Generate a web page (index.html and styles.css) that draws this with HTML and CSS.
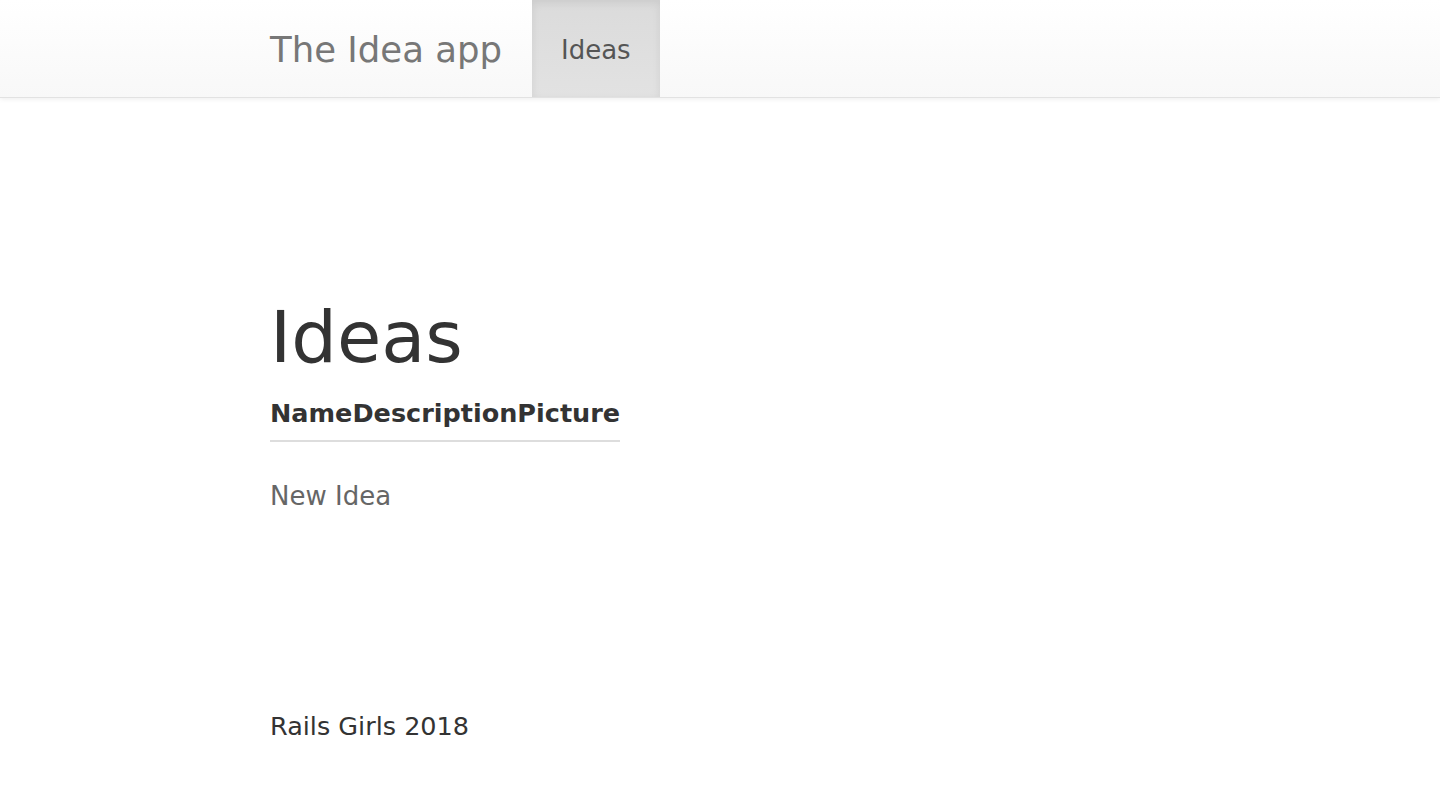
FILE: index.html
```html
<!DOCTYPE html>
<html lang="en">
<head>
<meta charset="utf-8">
<title>The Idea app</title>
<link rel="stylesheet" href="styles.css">
</head>
<body>
<nav class="navbar">
  <div class="container nav-inner">
    <a class="brand" href="#">The Idea app</a>
    <ul class="nav">
      <li class="active"><a href="#">Ideas</a></li>
    </ul>
  </div>
</nav>
<main class="container content">
  <h1 class="title">Ideas</h1>
  <table class="ideas">
    <thead>
      <tr><th>Name</th><th>Description</th><th>Picture</th></tr>
    </thead>
    <tbody></tbody>
  </table>
  <p class="new-link"><a href="#">New Idea</a></p>
</main>
<footer class="container footer">
  <p>Rails Girls 2018</p>
</footer>
</body>
</html>
```
FILE: styles.css
```css
* { box-sizing: border-box; }
html, body { margin: 0; padding: 0; }
body {
  font-family: "DejaVu Sans", Verdana, sans-serif;
  color: #333;
  background: #fff;
}
.container {
  width: 900px;
  margin: 0 0 0 270px;
}
.navbar {
  height: 98px;
  background: linear-gradient(to bottom, #fff 0, #f8f8f8 100%);
  border-bottom: 1px solid #e2e2e2;
  box-shadow: 0 1px 5px rgba(0,0,0,.075);
}
.nav-inner {
  display: flex;
  align-items: stretch;
  height: 97px;
}
.brand {
  font-size: 35.5px;
  color: #777;
  text-decoration: none;
  display: flex;
  align-items: center;
  padding: 2px 30px 0 0;
}
.nav {
  list-style: none;
  margin: 0;
  padding: 0;
  display: flex;
}
.nav li { display: flex; }
.nav a {
  display: flex;
  align-items: center;
  padding: 2px 29px 0;
  font-size: 26px;
  color: #555;
  text-decoration: none;
}
.nav li.active a {
  background: linear-gradient(to bottom, #dbdbdb 0, #e2e2e2 100%);
  box-shadow: inset 0 3px 9px rgba(0,0,0,.075);
}
.content { padding-top: 200px; }
.title {
  font-size: 72px;
  font-weight: normal;
  margin: 0;
  line-height: 1.1;
}
.ideas {
  border-collapse: collapse;
  margin-top: 21px;
}
.ideas th {
  font-size: 25.5px;
  font-weight: bold;
  text-align: left;
  padding: 0 0 12px 0;
  border-bottom: 2px solid #ddd;
}
.new-link { margin: 39px 0 0; font-size: 26px; }
.new-link a { color: #666; text-decoration: none; }
.footer { margin-top: 200px; font-size: 25.5px; }
.footer p { margin: 0; }
```
